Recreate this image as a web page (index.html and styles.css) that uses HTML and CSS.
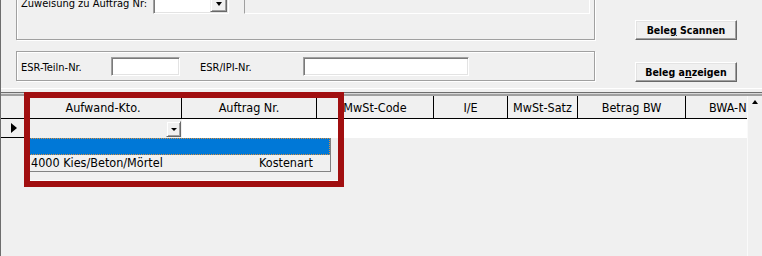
FILE: index.html
```html
<html>
<head>
    <link rel="stylesheet" href="styles.css">
</head>
<body>
    <div class="form">
        <div class="groups">
            <div class="group group-top">
                <div class="row">
                    <span class="label lbl-zuw">Zuweisung zu Auftrag Nr:</span>
                    <div class="combo">
                        <div class="combo-btn"><span class="arrow-down"></span></div>
                    </div>
                    <div class="field field-off"></div>
                </div>
            </div>
            <div class="group group-esr">
                <div class="row">
                    <span class="label lbl-esr">ESR-Teiln-Nr.</span>
                    <div class="field field-esr"></div>
                    <span class="label lbl-ipi">ESR/IPI-Nr.</span>
                    <div class="field field-ipi"></div>
                </div>
            </div>
        </div>
        <div class="buttons">
            <button class="btn">Bele<u>g</u> Scannen</button>
            <button class="btn">Beleg a<u>n</u>zeigen</button>
        </div>
    </div>

    <div class="grid">
        <div class="grid-inner">
            <div class="grid-main">
                <div class="table">
                    <div class="head">
                        <div class="hcell"></div>
                        <div class="hcell">Aufwand-Kto.</div>
                        <div class="hcell">Auftrag Nr.</div>
                        <div class="hcell">MwSt-Code</div>
                        <div class="hcell">I/E</div>
                        <div class="hcell">MwSt-Satz</div>
                        <div class="hcell">Betrag BW</div>
                        <div class="hcell hcell-last">BWA-Nr.</div>
                    </div>
                    <div class="datarow">
                        <div class="selector"><span class="arrow-right"></span></div>
                        <div class="cell-combo">
                            <div class="cell-btn"><span class="arrow-down small"></span></div>
                        </div>
                        <div class="cell-rest"></div>
                    </div>
                </div>
                <div class="vscroll">
                    <div class="vscroll-btn"><span class="arrow-up"></span></div>
                </div>
            </div>
        </div>
    </div>

    <div class="ddlist">
        <div class="dditem dditem-sel"></div>
        <div class="dditem">
            <span class="dd-name">4000 Kies/Beton/Mörtel</span>
            <span class="dd-type">Kostenart</span>
        </div>
    </div>
    <div class="ddline"></div>

    <div class="marker"></div>
</body>
</html>
```

FILE: styles.css
```css
html, body {
    margin: 0;
}

body {
    position: relative;
    width: 761px;
    height: 256px;
    overflow: hidden;
    background: #f0f0f0;
    border-left: 1px solid #6d6d6d;
    font-family: "DejaVu Sans Condensed", "DejaVu Sans", sans-serif;
    color: #000;
}

/* top form */

.form {
    display: flex;
    height: 88px;
    padding-left: 15px;
    border-bottom: 1px solid #fff;
    margin-bottom: 3px;
}

.groups {
    width: 579px;
}

.group {
    box-sizing: border-box;
    border: 1px solid #a0a0a0;
    box-shadow: 1px 1px 0 #fff, inset 1px 1px 0 #fff;
}

.group-top {
    margin-top: -30px;
    height: 70px;
    padding: 21px 0 0 4px;
}

.group-esr {
    margin-top: 11px;
    height: 30px;
    padding: 5px 0 0 4px;
}

.row {
    display: flex;
    align-items: flex-start;
}

.label {
    font-size: 11px;
    line-height: 13px;
    white-space: nowrap;
}

.lbl-zuw {
    width: 132px;
    margin-top: 5px;
}

.lbl-esr {
    width: 90px;
    margin-top: 4px;
}

.lbl-ipi {
    width: 103px;
    margin-left: 20px;
    margin-top: 4px;
}

.field {
    box-sizing: border-box;
    height: 19px;
    background: #fff;
    border: 1px solid;
    border-color: #a0a0a0 #fff #fff #a0a0a0;
    box-shadow: inset 1px 1px 0 #7a7a7a, inset -1px -1px 0 #e3e3e3;
}

.field-esr {
    width: 69px;
}

.field-ipi {
    width: 166px;
}

.field-off {
    width: 346px;
    height: 22px;
    margin-left: 15px;
    background: #f0f0f0;
    box-shadow: none;
}

.combo {
    box-sizing: border-box;
    width: 76px;
    height: 22px;
    padding: 1px;
    display: flex;
    justify-content: flex-end;
    background: #fff;
    border: 1px solid;
    border-color: #a0a0a0 #fff #fff #a0a0a0;
    box-shadow: inset 1px 1px 0 #7a7a7a, inset -1px -1px 0 #e3e3e3;
}

.combo-btn {
    box-sizing: border-box;
    width: 17px;
    height: 18px;
    display: flex;
    align-items: flex-end;
    justify-content: center;
    padding-bottom: 5px;
    background: #f0f0f0;
    border: 1px solid;
    border-color: #f0f0f0 #696969 #696969 #f0f0f0;
    box-shadow: inset 1px 1px 0 #fff, inset -1px -1px 0 #a0a0a0;
}

.arrow-down {
    width: 0;
    height: 0;
    border-left: 3.5px solid transparent;
    border-right: 3.5px solid transparent;
    border-top: 4px solid #000;
}

.arrow-down.small {
    border-left-width: 3px;
    border-right-width: 3px;
    border-top-width: 3px;
}

.arrow-up {
    width: 0;
    height: 0;
    border-left: 3.5px solid transparent;
    border-right: 3.5px solid transparent;
    border-bottom: 4px solid #000;
}

.arrow-right {
    width: 0;
    height: 0;
    border-top: 5.5px solid transparent;
    border-bottom: 5.5px solid transparent;
    border-left: 6px solid #000;
}

.buttons {
    display: flex;
    flex-direction: column;
    gap: 22px;
    margin-left: 40px;
    padding-top: 20px;
}

.btn {
    box-sizing: border-box;
    width: 102px;
    height: 20px;
    padding: 0;
    font-family: "DejaVu Sans Condensed", "DejaVu Sans", sans-serif;
    font-weight: bold;
    font-size: 10.5px;
    color: #000;
    background: #f0f0f0;
    border: 1px solid;
    border-color: #fff #696969 #696969 #fff;
    box-shadow: inset -1px -1px 0 #a0a0a0, inset 1px 1px 0 #e3e3e3;
}

/* grid */

.grid {
    border-top: 1px solid #6e6e6e;
}

.grid-inner {
    border-top: 1px solid #d8d8d8;
}

.grid-main {
    display: flex;
    height: 162px;
    border-top: 2px solid #a0a0a0;
}

.table {
    width: 746px;
}

.head,
.datarow {
    display: grid;
    grid-template-columns: 24px 157px 135px 117px 74px 70px 108px 61px;
}

.head {
    height: 23px;
    border-bottom: 1px solid #000;
    box-sizing: border-box;
}

.hcell {
    box-sizing: border-box;
    height: 22px;
    padding-top: 1px;
    border-right: 1px solid #000;
    font-size: 12.5px;
    line-height: 21px;
    text-align: center;
    white-space: nowrap;
    overflow: hidden;
}

.hcell-last {
    border-right: none;
    text-align: left;
    padding-left: 23px;
}

.datarow {
    height: 19px;
    background: #fff;
}

.selector {
    box-sizing: border-box;
    display: flex;
    align-items: center;
    padding-left: 10px;
    background: #f0f0f0;
    border-right: 1px solid #000;
    border-bottom: 1px solid #000;
}

.cell-combo {
    display: flex;
    justify-content: flex-end;
    align-items: flex-start;
    padding: 2px 1px 0 0;
    background: #f0f0f0;
}

.cell-btn {
    box-sizing: border-box;
    width: 15px;
    height: 16px;
    display: flex;
    align-items: center;
    justify-content: center;
    background: #f0f0f0;
    border: 1px solid;
    border-color: #f0f0f0 #696969 #696969 #f0f0f0;
    box-shadow: inset 1px 1px 0 #fff, inset -1px -1px 0 #a0a0a0;
}

.cell-rest {
    grid-column: 3 / 9;
}

.vscroll {
    box-sizing: border-box;
    width: 15px;
    border-left: 1px solid #fafafa;
    background: #f0f0f0;
}

.vscroll-btn {
    height: 14px;
    display: flex;
    align-items: flex-start;
    justify-content: center;
    padding-top: 4px;
    box-sizing: border-box;
}

/* popup list over the grid */

.ddlist {
    position: absolute;
    left: 24px;
    top: 138px;
    width: 306px;
    box-sizing: border-box;
    background: #f0f0f0;
    border: 1px solid #828282;
    border-top: none;
}

.dditem {
    height: 16px;
    display: flex;
    font-size: 12.5px;
    line-height: 16px;
    white-space: nowrap;
}

.dditem-sel {
    box-sizing: border-box;
    height: 17px;
    background: #0078d7;
    border: 1px dotted #d89040;
}

.dd-name {
    width: 226px;
    padding-left: 5px;
}

.dd-type {
    padding-left: 2px;
}

.ddline {
    position: absolute;
    left: 29px;
    top: 180px;
    width: 308px;
    height: 1px;
    background: #fff;
}

.marker {
    position: absolute;
    left: 23px;
    top: 92px;
    width: 320px;
    height: 95px;
    box-sizing: border-box;
    border: 6px solid #a10f10;
}
```
